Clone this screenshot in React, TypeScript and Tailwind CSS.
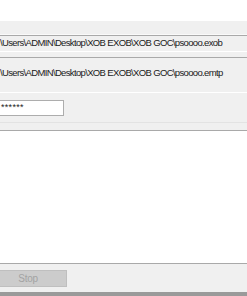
import React from 'react';

const font = { fontFamily: '"Liberation Sans", Arial, sans-serif' };

const App: React.FC = () => {
  return (
    <div className="w-[247px] h-[296px] overflow-hidden bg-white flex flex-col text-[9.5px] tracking-[-0.65px] text-[#1a1a1a]" style={font}>
      {/* top blank */}
      <div className="h-[21px] bg-white" />

      {/* header strip */}
      <div className="h-[14px] bg-[#f0f0f0] border-b border-[#fafafa]" />
      <div className="h-px bg-[#a9a9a9]" />

      {/* source path */}
      <div className="h-[15px] bg-[#f0f0f0] flex items-center whitespace-nowrap">
        <span>\Users\ADMIN\Desktop\XOB EXOB\XOB GOC\psoooo.exob</span>
      </div>
      <div className="h-px bg-white" />
      <div className="h-[5px] bg-[#f0f0f0]" />
      <div className="h-px bg-[#a9a9a9]" />

      {/* target path */}
      <div className="h-[34px] bg-[#f0f0f0] flex items-start pt-[8px] whitespace-nowrap">
        <span>\Users\ADMIN\Desktop\XOB EXOB\XOB GOC\psoooo.emtp</span>
      </div>
      <div className="h-px bg-white" />

      {/* password */}
      <div className="h-[29px] bg-[#f0f0f0] flex items-start pt-[7px]">
        <div className="ml-[-12px] w-[76px] h-[16px] bg-white border border-[#adadad] flex items-center pl-[12px] text-[9px] tracking-[0.3px]">
          ******
        </div>
      </div>
      <div className="h-px bg-[#e3e3e3]" />
      <div className="h-[7px] bg-[#f0f0f0]" />
      <div className="h-px bg-[#a9a9a9]" />

      {/* log area */}
      <div className="flex-1 bg-white" />

      {/* bottom bar */}
      <div className="h-px bg-[#a9a9a9]" />
      <div className="h-[28px] bg-[#f0f0f0] flex items-start pt-[6px]">
        <button className="ml-[-11px] w-[78px] h-[17px] bg-[#cccccc] border border-[#bfbfbf] text-[#a3a3a3] text-[10px] tracking-[-0.3px] flex items-center justify-center">
          Stop
        </button>
      </div>
      <div className="h-[4px] bg-[#9a9a9a]" />
    </div>
  );
};

export default App;
